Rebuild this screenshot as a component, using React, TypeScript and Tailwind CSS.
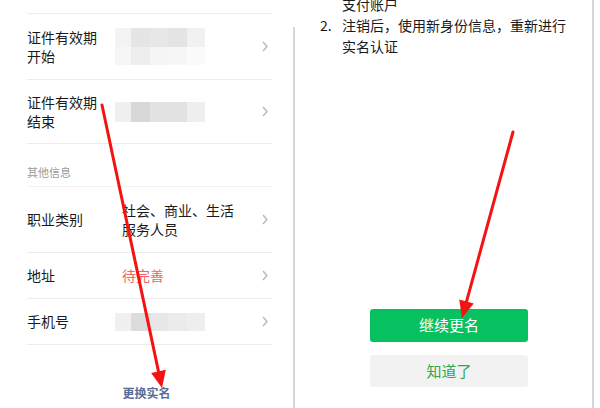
import React from "react";

const font = { fontFamily: '"Noto Sans CJK SC", "Noto Sans", sans-serif' };

function Chevron() {
  return (
    <svg width="6" height="11" viewBox="0 0 6 11" className="shrink-0">
      <polyline points="1,1 5,5.5 1,10" fill="none" stroke="#b8b8b8" strokeWidth="1.4" />
    </svg>
  );
}

function Mosaic({ rows, h }: { rows: string[][]; h: number }) {
  return (
    <div className="-ml-[7px] flex flex-col w-[90px] blur-[0.6px]">
      {rows.map((r, i) => (
        <div key={i} className="flex" style={{ height: h }}>
          {r.map((c, j) => (
            <div key={j} className={j === 0 ? "w-[16px]" : j === 4 ? "w-[18px]" : "w-[19px]"} style={{ background: c }} />
          ))}
        </div>
      ))}
    </div>
  );
}

function Arrow({ x1, y1, x2, y2 }: { x1: number; y1: number; x2: number; y2: number }) {
  const dx = x2 - x1;
  const dy = y2 - y1;
  const len = Math.sqrt(dx * dx + dy * dy);
  const ux = dx / len;
  const uy = dy / len;
  const hl = 17;
  const hw = 7.5;
  const bx = x2 - ux * hl;
  const by = y2 - uy * hl;
  const px = -uy;
  const py = ux;
  const pts = `${x2},${y2} ${bx + px * hw},${by + py * hw} ${bx - px * hw},${by - py * hw}`;
  return (
    <g>
      <line x1={x1} y1={y1} x2={bx + ux * 2} y2={by + uy * 2} stroke="#f51212" strokeWidth="3" strokeLinecap="round" />
      <polygon points={pts} fill="#f51212" />
    </g>
  );
}

export default function App() {
  return (
    <div className="relative flex w-[600px] h-[408px] overflow-hidden bg-white text-[#1a1a1a]" style={font}>
      {/* Left panel */}
      <div className="w-[293px] flex flex-col">
        <div className="ml-[27px] w-[245px] flex flex-col">
          <div className="h-[14px] border-b border-[#ececec]" />
          <div className="h-[66px] flex items-center border-b border-[#ececec] pr-[4px]">
            <div className="w-[95px] text-[14px] leading-[19px]">证件有效期<br />开始</div>
            <div className="flex-1">
              <Mosaic
                h={18.5}
                rows={[
                  ["#f3f3f3", "#e5e5e5", "#e7e7e7", "#e4e4e4", "#f1f1f1"],
                  ["#f6f6f6", "#eeeeee", "#f5f5f5", "#f7f7f7", "#fbfbfb"],
                ]}
              />
            </div>
            <Chevron />
          </div>
          <div className="h-[64px] flex items-center border-b border-[#ececec] pr-[4px]">
            <div className="w-[95px] text-[14px] leading-[19px]">证件有效期<br />结束</div>
            <div className="flex-1">
              <Mosaic h={20} rows={[["#f0f0f0", "#d8d8d8", "#e2e2e2", "#e2e2e2", "#eeeeee"]]} />
            </div>
            <Chevron />
          </div>
          <div className="h-[43px] flex items-end pb-[7px] border-b border-[#f2f2f2] text-[11px] leading-[14px] text-[#9a9a9a]">
            其他信息
          </div>
          <div className="h-[66px] flex items-center border-b border-[#ececec] pr-[4px]">
            <div className="w-[95px] text-[14px] leading-[19px]">职业类别</div>
            <div className="flex-1 text-[14px] leading-[19px]">社会、商业、生活<br />服务人员</div>
            <Chevron />
          </div>
          <div className="h-[46px] flex items-center border-b border-[#ececec] pr-[4px]">
            <div className="w-[95px] text-[14px] leading-[19px]">地址</div>
            <div className="flex-1 text-[14px] leading-[19px] text-[#f06464]">待完善</div>
            <Chevron />
          </div>
          <div className="h-[46px] flex items-center border-b border-[#ececec] pr-[4px]">
            <div className="w-[95px] text-[14px] leading-[19px]">手机号</div>
            <div className="flex-1">
              <Mosaic h={18} rows={[["#f0f0f0", "#dcdcdc", "#e7e7e7", "#ebebeb", "#eeeeee"]]} />
            </div>
            <Chevron />
          </div>
        </div>
        <div className="mt-[40px] text-center text-[12px] leading-[16px] font-bold text-[#576b95]">更换实名</div>
      </div>

      {/* divider */}
      <div className="w-[2px] mt-[27px] bg-[#d6d6d6]" />

      {/* Right panel */}
      <div className="w-[297px] flex flex-col">
        <div className="-mt-[6px] pl-[25px] text-[14px] leading-[21px]">
          <div className="pl-[22px]">支付账户</div>
          <div className="flex">
            <div className="w-[22px]">2.</div>
            <div>注销后，使用新身份信息，重新进行<br />实名认证</div>
          </div>
        </div>
        <div className="mt-auto mb-[21px] ml-[75px] w-[158px] flex flex-col gap-[13px]">
          <div className="h-[33px] rounded-[3px] bg-[#07c160] text-white text-[15px] flex items-center justify-center">继续更名</div>
          <div className="h-[32px] rounded-[3px] bg-[#f2f2f2] text-[#2fa84a] text-[15px] flex items-center justify-center">知道了</div>
        </div>
      </div>

      <div className="w-[2px] bg-[#d6d6d6]" />
      <div className="flex-1" />

      {/* overlay arrows */}
      <svg className="absolute inset-0 pointer-events-none" width="600" height="408">
        <Arrow x1={102} y1={105} x2={162} y2={388} />
        <Arrow x1={513} y1={132} x2={462} y2={318} />
      </svg>
    </div>
  );
}
